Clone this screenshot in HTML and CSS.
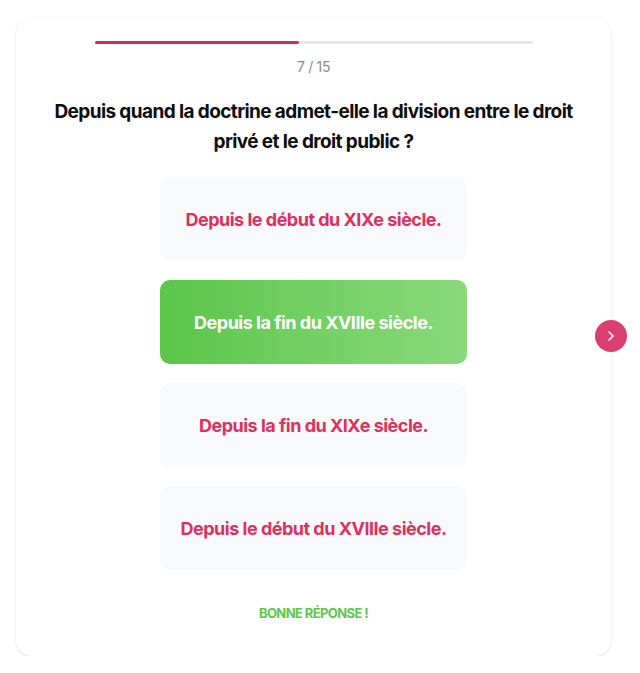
FILE: index.html
```html
<!DOCTYPE html>
<html lang="fr">
<head>
  <meta charset="UTF-8" />
  <meta name="viewport" content="width=device-width, initial-scale=1.0" />
  <title>Quiz - Droit</title>
  <link rel="stylesheet" href="styles.css">
</head>
<body>
  <div class="card">
    <div class="progress"><div class="progress-fill"></div></div>
    <p class="counter">7 / 15</p>
    <h1 class="question">Depuis quand la doctrine admet-elle la division entre le droit privé et le droit public ?</h1>
    <div class="answers">
      <button class="answer">Depuis le début du XIXe siècle.</button>
      <button class="answer correct">Depuis la fin du XVIIIe siècle.</button>
      <button class="answer">Depuis la fin du XIXe siècle.</button>
      <button class="answer">Depuis le début du XVIIIe siècle.</button>
    </div>
    <p class="feedback">Bonne réponse !</p>
    <button class="next" aria-label="Question suivante">
      <svg viewBox="0 0 24 24" width="16" height="16"><path d="M9 6l6 6-6 6" fill="none" stroke="#fff" stroke-width="2.4" stroke-linecap="round" stroke-linejoin="round"/></svg>
    </button>
  </div>
</body>
</html>
```

FILE: styles.css
```css
body {
  margin: 0;
  background: #fff;
  font-family: Inter, "Noto Sans", sans-serif;
}
.card {
  position: relative;
  box-sizing: border-box;
  width: 595px;
  height: 638px;
  margin: 18px 0 0 16px;
  padding: 23px 0 0;
  background: #fff;
  border-radius: 16px;
  box-shadow: 0 1px 3px rgba(0,0,0,0.12), 0 0 1px rgba(0,0,0,0.08);
  display: flex;
  flex-direction: column;
  align-items: center;
}
.progress {
  width: 438px;
  height: 3px;
  background: #e6e6e6;
  border-radius: 2px;
}
.progress-fill {
  width: 204px;
  height: 100%;
  background: #e0285c;
  border-radius: 2px;
}
.counter {
  margin: 14px 0 0;
  font-size: 14px;
  color: #8a8a8a;
  letter-spacing: -0.3px;
}
.question {
  width: 525px;
  margin: 22px 0 0;
  font-size: 19px;
  line-height: 30px;
  font-weight: 700;
  text-align: center;
  color: #0d0d0d;
  letter-spacing: -0.6px;
}
.answers {
  display: flex;
  flex-direction: column;
  gap: 19px;
  margin-top: 20px;
}
.answer {
  width: 307px;
  height: 84px;
  border: none;
  border-radius: 10px;
  background: #f8f9fb;
  color: #df2f5e;
  font-family: inherit;
  font-size: 18px;
  font-weight: 700;
  letter-spacing: -0.5px;
}
.answer.correct {
  background: linear-gradient(90deg, #5bc64a, #8ad97c);
  color: #fff;
}
.feedback {
  margin: 35px 0 0;
  font-size: 13px;
  font-weight: 700;
  text-transform: uppercase;
  color: #5ac84a;
  letter-spacing: -0.6px;
}
.next {
  position: absolute;
  right: -16px;
  top: 302px;
  width: 32px;
  height: 32px;
  border: none;
  border-radius: 50%;
  background: #da3f6f;
  display: flex;
  align-items: center;
  justify-content: center;
  padding: 0;
}
```
